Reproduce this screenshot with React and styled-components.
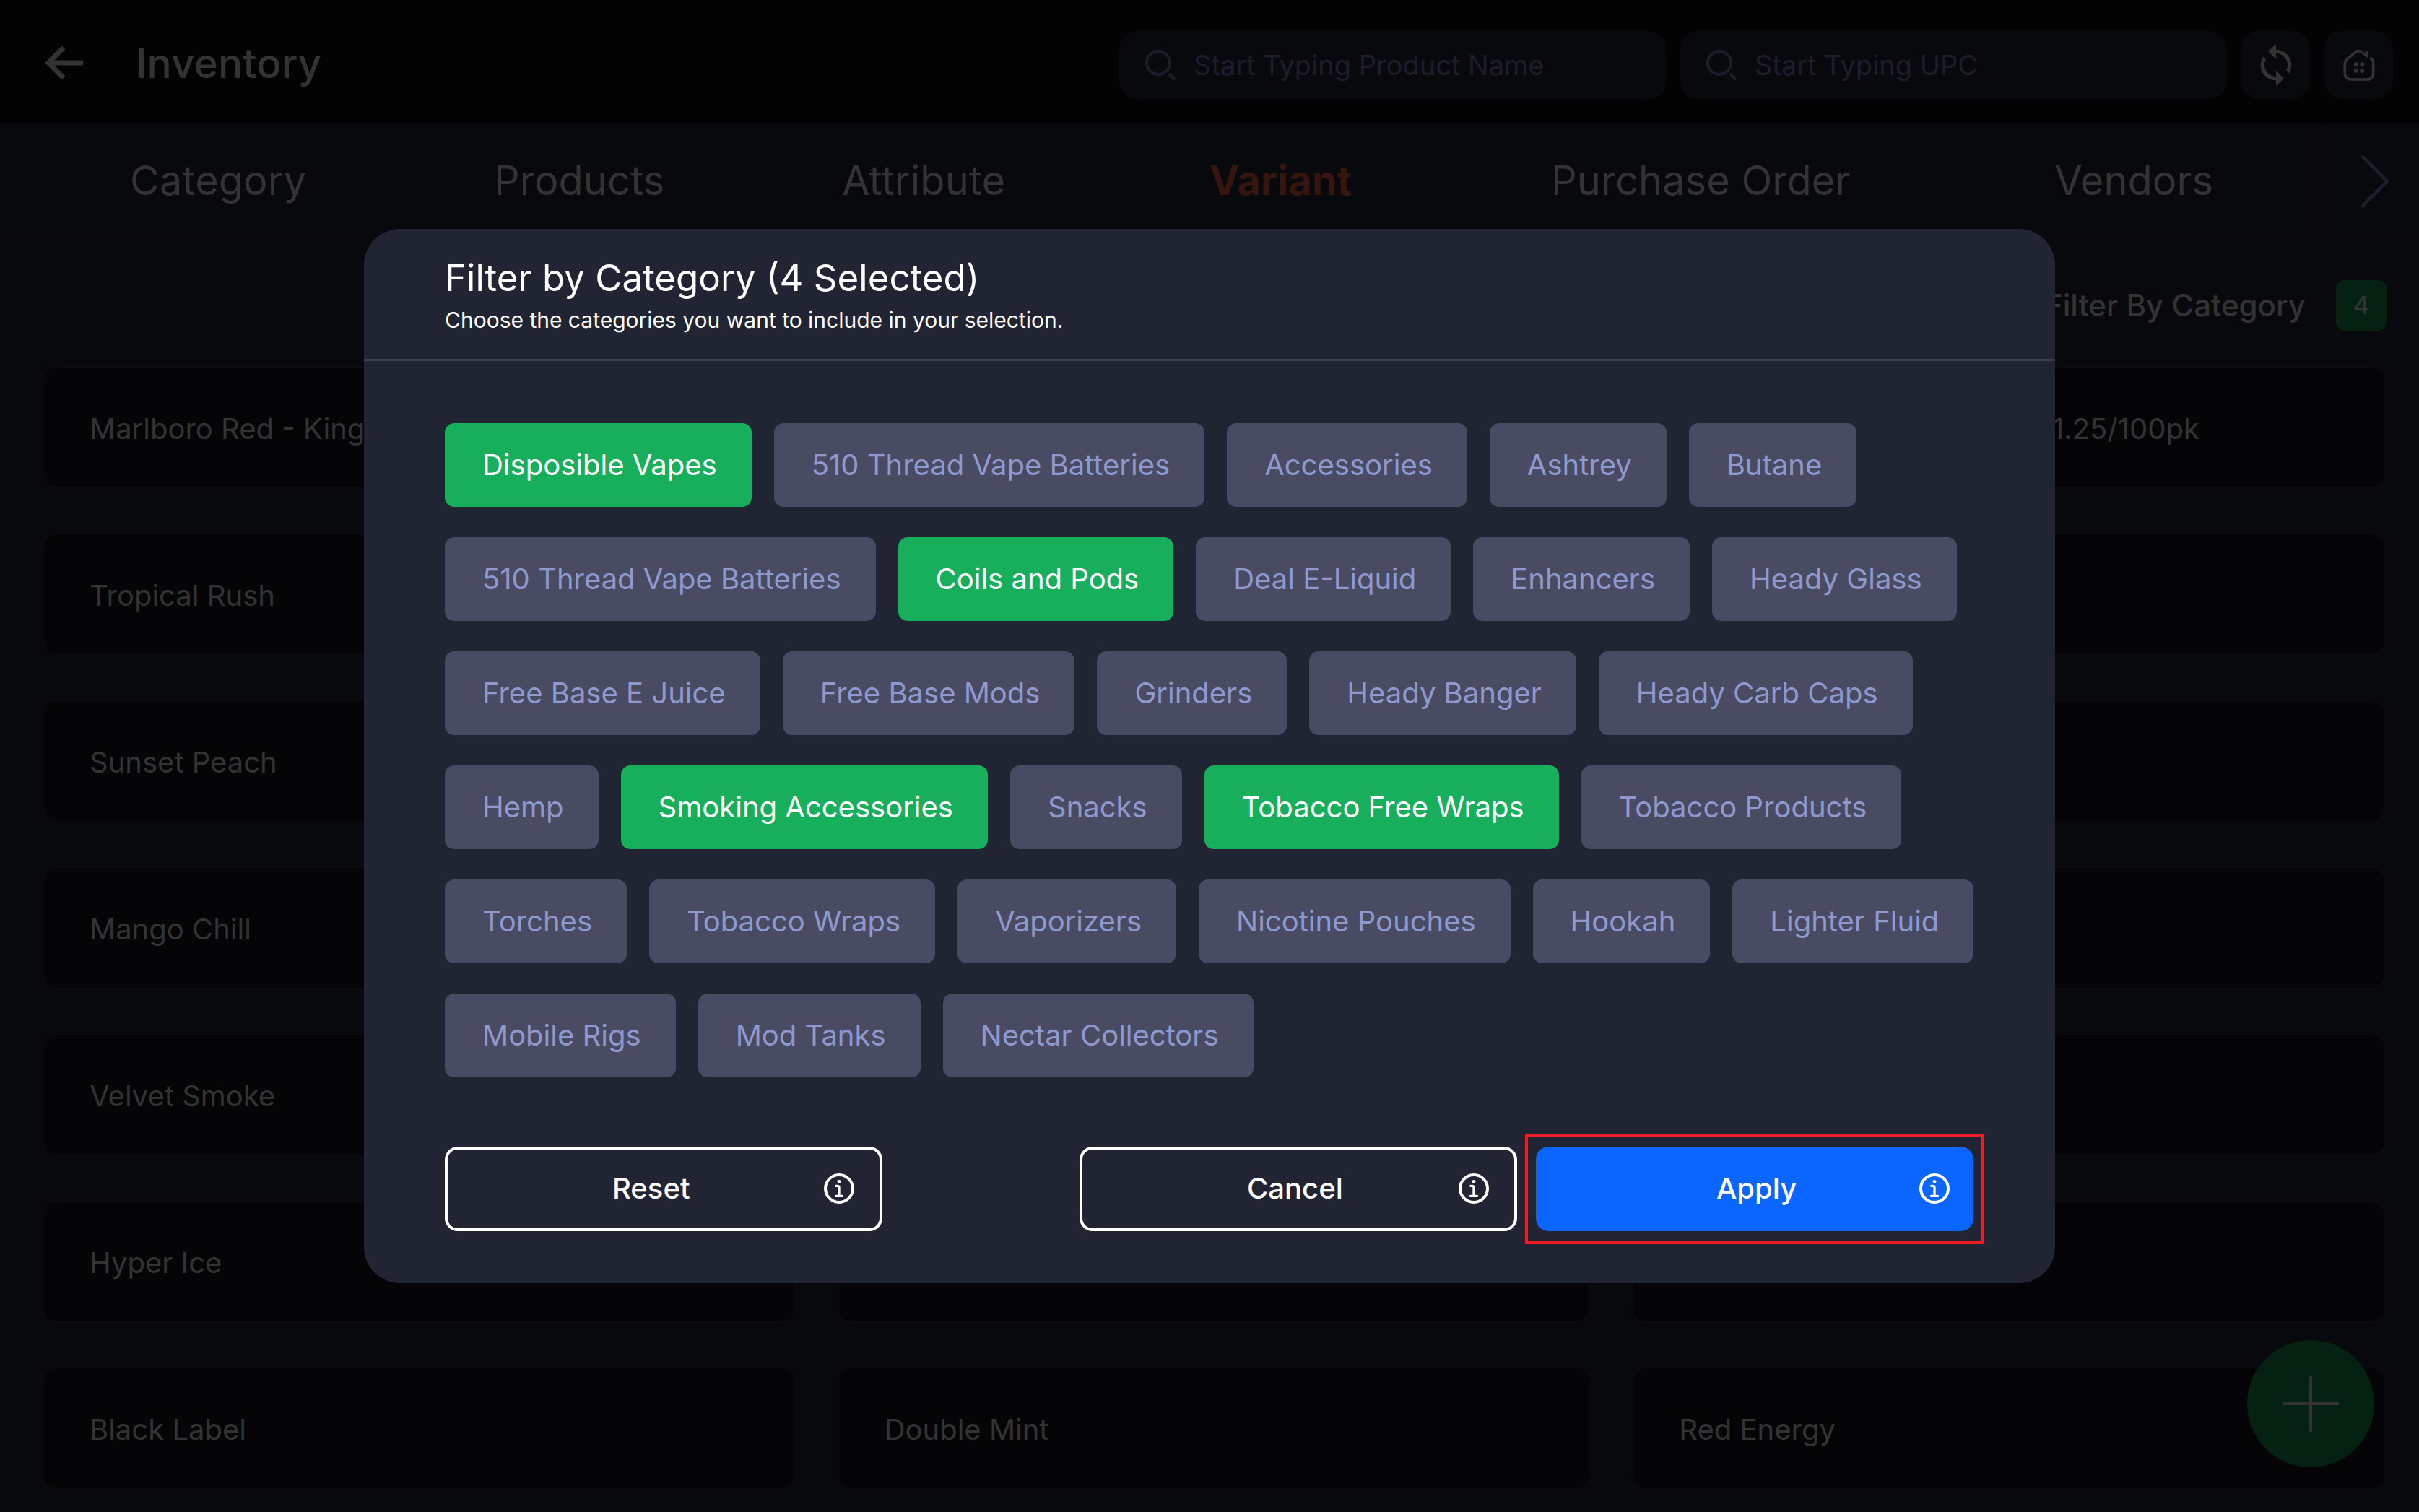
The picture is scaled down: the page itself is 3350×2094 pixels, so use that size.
import React, { useState } from "react";
import styled, { createGlobalStyle, css } from "styled-components";

const GlobalStyle = createGlobalStyle`
  *, *::before, *::after { box-sizing: border-box; }
  body {
    margin: 0;
    background: #08090d;
    color: #333333;
    font-family: Inter, "Liberation Sans", sans-serif;
    font-size: 40px;
    line-height: 48px;
  }
  button, input { font: inherit; color: inherit; }
  button { cursor: pointer; }
  h1, h2, p, ul { margin: 0; padding: 0; }
  ul { list-style: none; }
  svg { display: block; flex: none; }
`;

const Page = styled.div`
  min-height: 100vh;
`;

const Header = styled.header`
  display: flex;
  align-items: center;
  gap: 20px;
  padding: 43px 36px 34px 62px;
  background: #030304;
`;

const BackButton = styled.button`
  padding: 0 0 6px;
  border: 0;
  background: none;
  margin-right: 52px;
`;

const PageTitle = styled.h1`
  flex: 1;
  padding-bottom: 4px;
  font-size: 57px;
  line-height: 64px;
  font-weight: 500;
`;

const SearchField = styled.label`
  display: flex;
  align-items: center;
  gap: 24px;
  width: 757px;
  height: 94px;
  padding: 0 36px;
  border-radius: 24px;
  background: #08090d;
  color: #1c1d28;
  font-size: 38px;
`;

const SearchInput = styled.input`
  flex: 1;
  min-width: 0;
  padding: 0;
  border: 0;
  outline: 0;
  background: none;
  &::placeholder { color: inherit; opacity: 1; }
`;

const IconButton = styled.button`
  display: grid;
  place-items: center;
  width: 95px;
  height: 94px;
  padding: 0;
  border: 0;
  border-radius: 24px;
  background: #08090d;
`;

const TabBar = styled.nav`
  display: flex;
  height: 160px;
  border-bottom: 3px solid #0b0b0e;
`;

const TabList = styled.div`
  flex: 1;
  display: grid;
  grid-template-columns: 504fr 482fr 509fr 473fr 697fr 369fr;
  align-items: center;
  padding-left: 180px;
`;

const Tab = styled.a`
  color: ${(p) => (p.$active ? "#36150e" : "#333333")};
  font-size: 56px;
  line-height: 64px;
  font-weight: ${(p) => (p.$active ? 700 : 400)};
  text-decoration: none;
  white-space: nowrap;
`;

const NextTabs = styled.button`
  display: flex;
  align-items: center;
  width: 136px;
  padding: 2px 0 0 52px;
  border: 0;
  border-left: 3px solid #0b0b0e;
  background: none;
  color: #1c1d28;
`;

const FilterBar = styled.div`
  display: flex;
  align-items: center;
  justify-content: flex-end;
  gap: 42px;
  padding: 57px 45px 49px;
  font-size: 42px;
  font-weight: 500;
`;

const CountBadge = styled.span`
  width: 70px;
  height: 70px;
  border-radius: 12px;
  background: #052112;
  font-size: 34px;
  line-height: 70px;
  text-align: center;
`;

const CardGrid = styled.ul`
  display: grid;
  grid-template-columns: repeat(3, 1fr);
  gap: 61px 58px;
  padding: 0 47px 32px 59px;
`;

const Card = styled.li`
  display: flex;
  align-items: center;
  height: 170px;
  padding: 4px 62px 0 63px;
  padding-right: ${(p) => (p.$alignEnd ? 255 : 62)}px;
  justify-content: ${(p) => (p.$alignEnd ? "flex-end" : "flex-start")};
  border: 2px solid #0b0b0d;
  border-radius: 18px;
  background: #050507;
`;

const AddButton = styled.button`
  position: fixed;
  right: 62px;
  bottom: 62px;
  display: grid;
  place-items: center;
  width: 176px;
  height: 176px;
  padding: 0;
  border: 0;
  border-radius: 50%;
  background: #052112;
`;

const Backdrop = styled.div`
  position: fixed;
  inset: 0;
  display: flex;
  align-items: center;
  justify-content: center;
`;

const Dialog = styled.section`
  width: 70%;
  max-width: 2342px;
  border-radius: 50px;
  background: #212433;
  color: #ffffff;
`;

const DialogHeader = styled.header`
  padding: 37px 112px 27px;
  border-bottom: 3px solid #3d404f;
`;

const DialogTitle = styled.h2`
  font-size: 51px;
  line-height: 62px;
  font-weight: 400;
`;

const DialogHint = styled.p`
  font-size: 30px;
  line-height: 54px;
`;

const DialogBody = styled.div`
  display: flex;
  flex-direction: column;
  gap: 96px;
  padding: 86px 113px 72px 112px;
`;

const ChipRows = styled.div`
  display: flex;
  flex-direction: column;
  gap: 42px;
`;

const ChipRow = styled.div`
  display: flex;
  gap: 31px;
`;

const Chip = styled.button`
  height: 116px;
  padding: 0 48px 0 52px;
  border: 0;
  border-radius: 13px;
  background: ${(p) => (p.$on ? "#17ae5c" : "#484b61")};
  color: ${(p) => (p.$on ? "#ffffff" : "#8f99cf")};
  white-space: nowrap;
`;

const Actions = styled.footer`
  display: flex;
  gap: 26px;
`;

const ActionButton = styled.button`
  display: flex;
  align-items: center;
  width: 606px;
  height: 117px;
  padding: 0 35px 2px;
  border: 4px solid #ffffff;
  border-radius: 18px;
  background: none;
  font-weight: 500;

  &:first-child { margin-right: auto; }

  ${(p) =>
    p.$primary &&
    css`
      padding-right: 29px;
      border-color: #0a66ff;
      background: #0a66ff;
    `}
`;

const ActionLabel = styled.span`
  flex: 1;
  padding-left: ${(p) => (p.$primary ? 211 : 193)}px;
  text-align: left;
`;

const Highlight = styled.div`
  position: relative;

  &::after {
    content: "";
    position: absolute;
    inset: -17px -15px -18px;
    border: 4px solid #ee1c25;
    pointer-events: none;
  }
`;

const BackIcon = () => (
  <svg width="54" height="46" viewBox="0 0 54 46" fill="none" stroke="currentColor" strokeWidth="7">
    <path d="M53 23H5M26 2 5 23l21 21" />
  </svg>
);

const SearchIcon = () => (
  <svg width="43" height="43" viewBox="0 0 43 43" fill="none" stroke="currentColor" strokeWidth="4" strokeLinecap="round">
    <circle cx="18" cy="18" r="16" />
    <path d="m34 34 6 6" />
  </svg>
);

const SyncIcon = () => (
  <svg width="64" height="64" viewBox="0 0 24 24" fill="currentColor">
    <path d="M12 4V1L8 5l4 4V6c3.31 0 6 2.69 6 6 0 1.01-.25 1.97-.7 2.8l1.46 1.46A7.93 7.93 0 0 0 20 12c0-4.42-3.58-8-8-8zm0 14c-3.31 0-6-2.69-6-6 0-1.01.25-1.97.7-2.8L5.24 7.74A7.93 7.93 0 0 0 4 12c0 4.42 3.58 8 8 8v3l4-4-4-4v3z" />
  </svg>
);

const HomeIcon = () => (
  <svg width="46" height="46" viewBox="432 108 138 138" fill="none" stroke="currentColor" strokeWidth="11" strokeLinecap="round" strokeLinejoin="round">
    <path d="M550 149q10 9 10 21v40q0 27-27 27h-63q-28 0-28-27v-35q0-15 10-23l34-28q14-10 28 0l20 16v-18" />
    <g fill="currentColor" stroke="none">
      <circle cx="488" cy="175" r="9" />
      <circle cx="514" cy="175" r="9" />
      <circle cx="488" cy="201" r="9" />
      <circle cx="514" cy="201" r="9" />
    </g>
  </svg>
);

const ChevronIcon = () => (
  <svg width="42" height="76" viewBox="0 0 42 76" fill="none" stroke="currentColor" strokeWidth="5" strokeLinecap="round" strokeLinejoin="round">
    <path d="m3 4 34 34L3 72" />
  </svg>
);

const PlusIcon = () => (
  <svg width="78" height="78" viewBox="0 0 78 78" stroke="currentColor" strokeWidth="4">
    <path d="M39 0v78M0 39h78" />
  </svg>
);

const InfoIcon = () => (
  <svg width="42" height="42" viewBox="0 0 126 126" fill="none" stroke="currentColor" strokeLinecap="round" strokeLinejoin="round">
    <circle cx="63" cy="63" r="57" strokeWidth="12" />
    <circle cx="63" cy="34" r="7" fill="currentColor" stroke="none" />
    <path d="M50 52h6q7 0 7 7v35M49 94h28" strokeWidth="10" />
  </svg>
);

const tabs = ["Category", "Products", "Attribute", "Variant", "Purchase Order", "Vendors"];

const cards = [
  "Marlboro Red - King", "", { name: "1.25/100pk", alignEnd: true },
  "Tropical Rush", "", "",
  "Sunset Peach", "", "",
  "Mango Chill", "", "",
  "Velvet Smoke", "", "",
  "Hyper Ice", "", "",
  "Black Label", "Double Mint", "Red Energy",
];

const categoryRows = [
  ["Disposible Vapes", "510 Thread Vape Batteries", "Accessories", "Ashtrey", "Butane"],
  ["510 Thread Vape Batteries", "Coils and Pods", "Deal E-Liquid", "Enhancers", "Heady Glass"],
  ["Free Base E Juice", "Free Base Mods", "Grinders", "Heady Banger", "Heady Carb Caps"],
  ["Hemp", "Smoking Accessories", "Snacks", "Tobacco Free Wraps", "Tobacco Products"],
  ["Torches", "Tobacco Wraps", "Vaporizers", "Nicotine Pouches", "Hookah", "Lighter Fluid"],
  ["Mobile Rigs", "Mod Tanks", "Nectar Collectors"],
];

const initialSelection = ["Disposible Vapes", "Coils and Pods", "Smoking Accessories", "Tobacco Free Wraps"];

function Search({ placeholder }) {
  return (
    <SearchField>
      <SearchIcon />
      <SearchInput type="text" placeholder={placeholder} />
    </SearchField>
  );
}

function Action({ label, primary, onClick }) {
  return (
    <ActionButton type="button" $primary={primary} onClick={onClick}>
      <ActionLabel $primary={primary}>{label}</ActionLabel>
      <InfoIcon />
    </ActionButton>
  );
}

export default function App() {
  const [selected, setSelected] = useState(initialSelection);
  const toggle = (name) =>
    setSelected((list) => (list.includes(name) ? list.filter((n) => n !== name) : [...list, name]));

  return (
    <>
      <GlobalStyle />
      <Page>
        <Header>
          <BackButton type="button" aria-label="Back"><BackIcon /></BackButton>
          <PageTitle>Inventory</PageTitle>
          <Search placeholder="Start Typing Product Name" />
          <Search placeholder="Start Typing UPC" />
          <IconButton type="button" aria-label="Refresh"><SyncIcon /></IconButton>
          <IconButton type="button" aria-label="Home"><HomeIcon /></IconButton>
        </Header>
        <TabBar>
          <TabList>
            {tabs.map((tab) => (
              <Tab key={tab} href="#" $active={tab === "Variant"}>{tab}</Tab>
            ))}
          </TabList>
          <NextTabs type="button" aria-label="More tabs"><ChevronIcon /></NextTabs>
        </TabBar>
        <FilterBar>
          <span>Filter By Category</span>
          <CountBadge>{selected.length}</CountBadge>
        </FilterBar>
        <CardGrid>
          {cards.map((card, i) => (
            <Card key={i} $alignEnd={card.alignEnd}>{card.name ?? card}</Card>
          ))}
        </CardGrid>
        <AddButton type="button" aria-label="Add"><PlusIcon /></AddButton>
      </Page>
      <Backdrop>
        <Dialog role="dialog" aria-labelledby="filter-title">
          <DialogHeader>
            <DialogTitle id="filter-title">Filter by Category ({selected.length} Selected)</DialogTitle>
            <DialogHint>Choose the categories you want to include in your selection.</DialogHint>
          </DialogHeader>
          <DialogBody>
            <ChipRows>
              {categoryRows.map((row, r) => (
                <ChipRow key={r}>
                  {row.map((name) => (
                    <Chip
                      key={name}
                      type="button"
                      $on={selected.includes(name)}
                      aria-pressed={selected.includes(name)}
                      onClick={() => toggle(name)}
                    >
                      {name}
                    </Chip>
                  ))}
                </ChipRow>
              ))}
            </ChipRows>
            <Actions>
              <Action label="Reset" onClick={() => setSelected([])} />
              <Action label="Cancel" />
              <Highlight>
                <Action label="Apply" primary />
              </Highlight>
            </Actions>
          </DialogBody>
        </Dialog>
      </Backdrop>
    </>
  );
}
